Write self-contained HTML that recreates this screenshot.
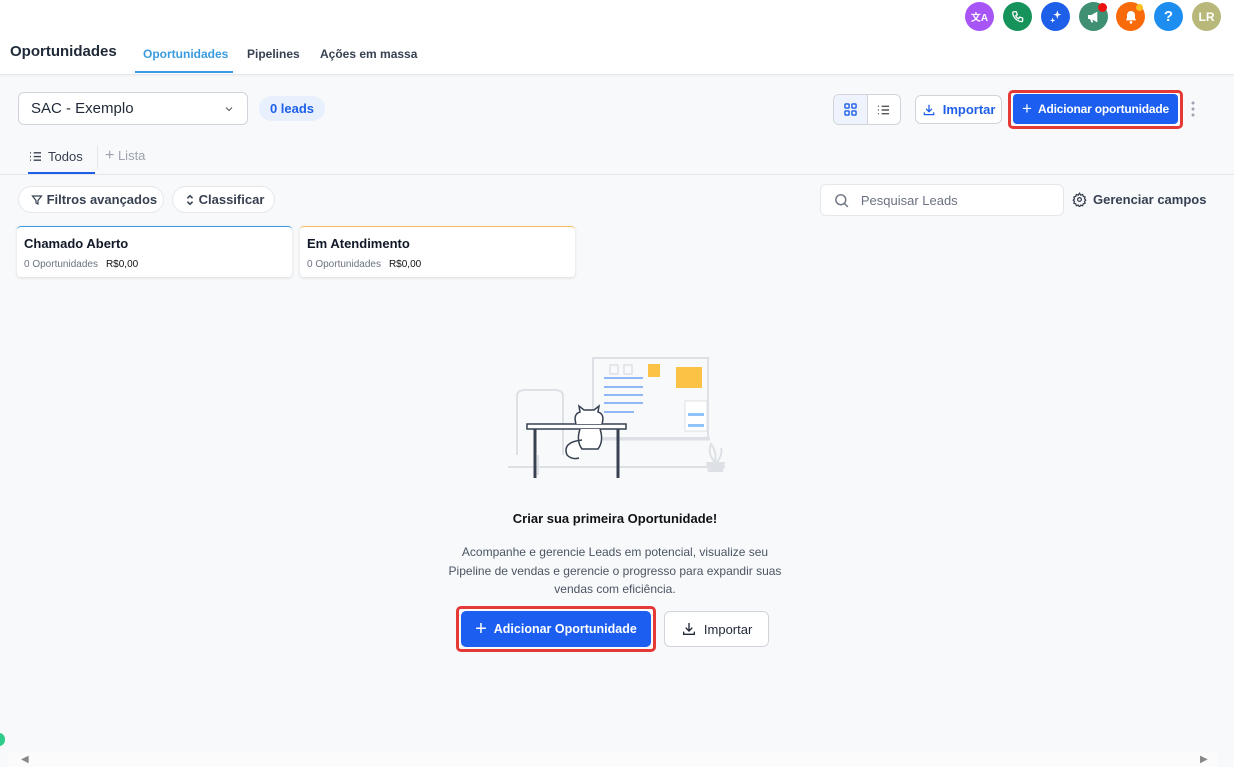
<!DOCTYPE html>
<html><head><meta charset="utf-8"><style>
*{box-sizing:border-box;margin:0;padding:0}
body{width:1234px;height:767px;overflow:hidden;background:#f8f9fb;font-family:"Liberation Sans",sans-serif;color:#111827;position:relative}
.abs{position:absolute;white-space:nowrap}
.top{left:0;top:0;width:1234px;height:75px;background:#fff;border-bottom:1px solid #e5e7eb;box-shadow:0 1px 2px rgba(0,0,0,.04)}
.av{width:29px;height:29px;border-radius:50%;top:2px;display:flex;align-items:center;justify-content:center;color:#fff;font-size:13px;font-weight:bold}
.btn{border:1px solid #d1d5db;background:#fff;border-radius:6px;display:flex;align-items:center;justify-content:center;font-size:13px}
.pill{border:1px solid #e5e7eb;background:#fff;border-radius:14px;display:flex;align-items:center;font-size:13px;color:#374151;font-weight:bold}
.card{background:#fff;border-radius:4px;box-shadow:0 1px 3px rgba(0,0,0,.12);width:275px;height:51px;top:226px;padding:9px 7px}
.card b{font-size:13px;display:block;margin-bottom:3px}
.card span{font-size:10px;color:#6b7280}
.card i{font-style:normal;font-size:10px;color:#111;margin-left:8px}
</style></head><body>
<div class="abs top"></div>
<div class="abs av" style="left:965px;background:#a855f7;font-size:10px;font-family:'Liberation Sans','Noto Sans CJK SC',sans-serif">文A</div>
<div class="abs av" style="left:1003px;background:#16935a"><svg width="14" height="14" viewBox="0 0 24 24" fill="none" stroke="#fff" stroke-width="2.2"><path d="M5 3h4l2 5-3 2a11 11 0 005 5l2-3 5 2v4a2 2 0 01-2 2A17 17 0 013 5a2 2 0 012-2z"/></svg></div>
<div class="abs av" style="left:1041px;background:#1d5fe8"><svg width="16" height="16" viewBox="0 0 24 24" fill="#fff"><path d="M14 2l1.5 5L20 8.5 15.5 10 14 15l-1.5-5L8 8.5 12.5 7z"/><path d="M7 13l1 3 3 1-3 1-1 3-1-3-3-1 3-1z"/></svg></div>
<div class="abs av" style="left:1079px;background:#3f8f72"><svg width="16" height="16" viewBox="0 0 24 24" fill="#fff"><path d="M3 9h5l9-5v16l-9-5H3z"/><path d="M6 15l2 5h3l-2-5z"/></svg></div>
<div class="abs" style="left:1098px;top:3px;width:9px;height:9px;border-radius:50%;background:#e11"></div>
<div class="abs av" style="left:1116px;background:#f96a0b"><svg width="16" height="16" viewBox="0 0 24 24" fill="#fff"><path d="M12 3a6 6 0 00-6 6v5l-2 3h16l-2-3V9a6 6 0 00-6-6z"/><circle cx="12" cy="20" r="2"/></svg></div>
<div class="abs" style="left:1136px;top:4px;width:7px;height:7px;border-radius:50%;background:#fbbf24"></div>
<div class="abs av" style="left:1154px;background:#1d8ef0;font-size:15px">?</div>
<div class="abs av" style="left:1192px;background:#b8b87a;font-size:12px">LR</div>

<div class="abs" style="left:10px;top:43px;font-size:15px;font-weight:bold;color:#1f2937">Oportunidades</div>
<div class="abs" style="left:143px;top:47px;font-size:12px;font-weight:bold;color:#3b9be0">Oportunidades</div>
<div class="abs" style="left:135px;top:71px;width:98px;height:2px;background:#3b9be0"></div>
<div class="abs" style="left:247px;top:47px;font-size:12px;font-weight:bold;color:#374151">Pipelines</div>
<div class="abs" style="left:320px;top:47px;font-size:12px;font-weight:bold;color:#374151">Ações em massa</div>

<div class="abs btn" style="left:18px;top:92px;width:230px;height:33px;justify-content:space-between;padding:0 12px;font-size:15px;color:#1f2937">SAC - Exemplo<svg width="12" height="12" viewBox="0 0 24 24" fill="none" stroke="#555" stroke-width="2"><path d="M6 9l6 6 6-6"/></svg></div>
<div class="abs" style="left:259px;top:96px;width:66px;height:25px;border-radius:13px;background:#e9f0fd;color:#1d5fe8;font-size:13px;font-weight:bold;display:flex;align-items:center;justify-content:center">0 leads</div>

<div class="abs btn" style="left:833px;top:94px;width:68px;height:31px;overflow:hidden;justify-content:flex-start"><div style="width:34px;height:31px;background:#eef3fd;border-right:1px solid #d1d5db;display:flex;align-items:center;justify-content:center"><svg width="13" height="13" viewBox="0 0 14 14" fill="none" stroke="#1d5fe8" stroke-width="1.5"><rect x="1" y="1" width="4.5" height="4.5" rx="1"/><rect x="8.5" y="1" width="4.5" height="4.5" rx="1"/><rect x="1" y="8.5" width="4.5" height="4.5" rx="1"/><rect x="8.5" y="8.5" width="4.5" height="4.5" rx="1"/></svg></div><div style="width:33px;display:flex;justify-content:center"><svg width="13" height="12" viewBox="0 0 14 12" fill="none" stroke="#555" stroke-width="1.5"><path d="M1 2h1M5 2h8M1 6h1M5 6h8M1 10h1M5 10h8"/></svg></div></div>
<div class="abs btn" style="left:915px;top:95px;width:87px;height:29px;color:#1d5fe8;font-weight:bold"><svg width="14" height="14" viewBox="0 0 24 24" fill="none" stroke="#1d5fe8" stroke-width="2.2"><path d="M12 3v12M7 10l5 5 5-5M4 16v4h16v-4"/></svg>&nbsp; Importar</div>
<div class="abs" style="left:1008px;top:90px;width:175px;height:39px;border:3px solid #e53935;border-radius:5px"></div>
<div class="abs" style="left:1013px;top:94px;width:165px;height:30px;background:#1b5ef0;border-radius:4px;color:#fff;font-size:12px;font-weight:bold;display:flex;align-items:center;justify-content:center;letter-spacing:-0.2px"><span style="font-size:17px;font-weight:normal">+</span>&nbsp;&nbsp;Adicionar oportunidade</div>
<svg class="abs" style="left:1190px;top:100px" width="6" height="18"><circle cx="3" cy="3" r="1.5" fill="#9ca3af"/><circle cx="3" cy="9" r="1.5" fill="#9ca3af"/><circle cx="3" cy="15" r="1.5" fill="#9ca3af"/></svg>

<svg class="abs" style="left:29px;top:151px" width="13" height="11" viewBox="0 0 14 12" fill="none" stroke="#374151" stroke-width="1.5"><path d="M1 2h1M5 2h8M1 6h1M5 6h8M1 10h1M5 10h8"/></svg>
<div class="abs" style="left:48px;top:149px;font-size:13px;color:#374151">Todos</div>
<div class="abs" style="left:28px;top:172px;width:67px;height:2px;background:#1d5fe8"></div>
<div class="abs" style="left:97px;top:145px;width:1px;height:24px;background:#e5e7eb"></div>
<div class="abs" style="left:105px;top:147px;font-size:13px;color:#9ca3af"><span style="font-size:16px">+</span> Lista</div>
<div class="abs" style="left:0;top:174px;width:1234px;height:1px;background:#e5e7eb"></div>

<div class="abs pill" style="left:18px;top:186px;width:146px;height:27px;padding-left:12px"><svg width="12" height="12" viewBox="0 0 24 24" fill="none" stroke="#374151" stroke-width="2.4"><path d="M3 4h18l-7 9v7l-4-2v-5z"/></svg>&nbsp;Filtros avançados</div>
<div class="abs pill" style="left:172px;top:186px;width:103px;height:27px;padding-left:12px"><svg width="10" height="12" viewBox="0 0 10 14" fill="none" stroke="#374151" stroke-width="1.8"><path d="M2 5l3-3 3 3M2 9l3 3 3-3"/></svg>&nbsp;Classificar</div>
<div class="abs btn" style="left:820px;top:184px;width:244px;height:32px;justify-content:flex-start;padding-left:12px;color:#6b7280;font-size:13px;border-color:#e5e7eb"><svg width="17" height="17" viewBox="0 0 24 24" fill="none" stroke="#6b7280" stroke-width="2"><circle cx="11" cy="11" r="7"/><path d="M16 16l5 5"/></svg>&nbsp;&nbsp;&nbsp;Pesquisar Leads</div>
<svg class="abs" style="left:1072px;top:192px" width="15" height="15" viewBox="0 0 24 24" fill="none" stroke="#374151" stroke-width="2"><circle cx="12" cy="12" r="3"/><path d="M12 2l2 3 3-1 1 3 3 1-1 3 2 2-2 2 1 3-3 1-1 3-3-1-2 3-2-3-3 1-1-3-3-1 1-3-2-2 2-2-1-3 3-1 1-3 3 1z"/></svg>
<div class="abs" style="left:1093px;top:192px;font-size:13px;font-weight:bold;color:#374151">Gerenciar campos</div>

<div class="abs card" style="left:17px;border-top:1px solid #3b9be0"><b>Chamado Aberto</b><span>0 Oportunidades</span><i>R$0,00</i></div>
<div class="abs card" style="left:300px;border-top:1px solid #f5c062"><b>Em Atendimento</b><span>0 Oportunidades</span><i>R$0,00</i></div>

<svg class="abs" style="left:490px;top:340px" width="250" height="150" viewBox="0 0 250 150" fill="none">
<line x1="18" y1="127" x2="235" y2="127" stroke="#dde1e6" stroke-width="2"/>
<rect x="103" y="18" width="115" height="80" stroke="#dde1e6" stroke-width="2" fill="#f8f9fb"/>
<line x1="100" y1="99" x2="220" y2="99" stroke="#dde1e6" stroke-width="3"/>
<g stroke="#dde1e6" stroke-width="1.5"><rect x="120" y="25" width="8" height="9"/><rect x="134" y="25" width="8" height="9"/></g>
<g stroke="#90b8f8" stroke-width="2"><line x1="114" y1="38" x2="153" y2="38"/><line x1="114" y1="47" x2="153" y2="47"/><line x1="114" y1="55" x2="153" y2="55"/><line x1="114" y1="63" x2="153" y2="63"/><line x1="114" y1="72" x2="144" y2="72"/></g>
<rect x="158" y="24" width="12" height="13" fill="#fbc246"/><rect x="186" y="27" width="26" height="21" fill="#fbc246"/>
<rect x="195" y="61" width="22" height="30" stroke="#dde1e6" fill="#fff"/><rect x="198" y="73" width="16" height="3" fill="#90c4f8"/><rect x="198" y="84" width="16" height="3" fill="#90c4f8"/>
<path d="M27 115V56q0-6 8-6h30q8 0 8 6v59" stroke="#dde1e6" stroke-width="2"/>
<line x1="48" y1="115" x2="48" y2="135" stroke="#dde1e6" stroke-width="2"/>
<rect x="37" y="84" width="99" height="5" stroke="#374151" stroke-width="1.5" fill="#fff"/>
<line x1="45" y1="89" x2="45" y2="138" stroke="#374151" stroke-width="3"/><line x1="128" y1="89" x2="128" y2="138" stroke="#374151" stroke-width="3"/>
<path d="M86 84q-3-10 4-12l-1-6 5 4h10l5-4-1 6q7 2 4 12M90 89q-4 12 2 20h16q6-8 2-20M92 100q-20 2-15 15 5 5 12 3" stroke="#374151" stroke-width="1.5" fill="#fff"/>
<path d="M218 132h15l2-10h-19z" fill="#dde1e6"/><path d="M225 122q-8-8-4-18 6 8 4 18zm2 0q6-8 4-14" stroke="#dde1e6" stroke-width="2"/>
</svg>

<div class="abs" style="left:0;width:1230px;top:511px;text-align:center;font-size:13px;font-weight:bold;color:#111">Criar sua primeira Oportunidade!</div>
<div class="abs" style="left:415px;width:400px;top:543px;text-align:center;font-size:12px;line-height:18.5px;color:#4b5563">Acompanhe e gerencie Leads em potencial, visualize seu<br>Pipeline de vendas e gerencie o progresso para expandir suas<br>vendas com eficiência.</div>
<div class="abs" style="left:456px;top:606px;width:200px;height:46px;border:3px solid #e53935;border-radius:5px"></div>
<div class="abs" style="left:461px;top:611px;width:190px;height:36px;background:#1b5ef0;border-radius:5px;color:#fff;font-size:12.5px;font-weight:bold;display:flex;align-items:center;justify-content:center"><span style="font-size:20px;font-weight:normal">+</span>&nbsp;&nbsp;Adicionar Oportunidade</div>
<div class="abs btn" style="left:664px;top:611px;width:105px;height:36px;font-size:13px;color:#1f2937"><svg width="16" height="16" viewBox="0 0 24 24" fill="none" stroke="#1f2937" stroke-width="2"><path d="M12 3v12M7 10l5 5 5-5M4 16v4h16v-4"/></svg>&nbsp;&nbsp;Importar</div>

<div class="abs" style="left:-6px;top:733px;width:11px;height:13px;border-radius:50%;background:#2ecc8a"></div>
<div class="abs" style="left:8px;top:753px;width:1210px;height:14px;background:#fbfbfc"></div>
<div class="abs" style="left:21px;top:754px;font-size:10px;color:#888">◀</div>
<div class="abs" style="left:1200px;top:754px;font-size:10px;color:#888">▶</div>
</body></html>
